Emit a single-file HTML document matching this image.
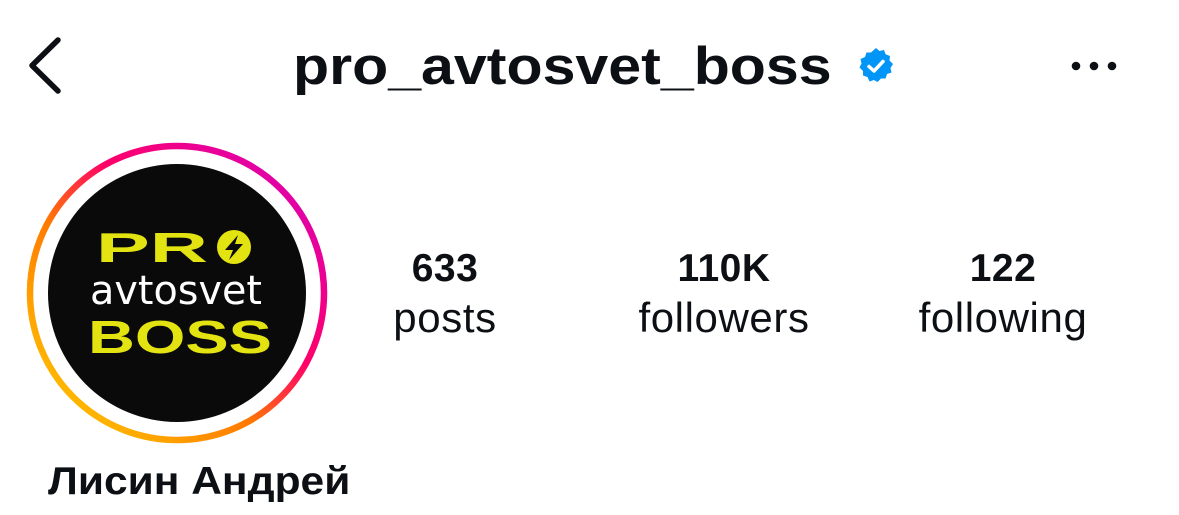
<!DOCTYPE html>
<html><head><meta charset="utf-8"><style>
html,body{margin:0;padding:0;background:#fff;width:1179px;height:515px;overflow:hidden;position:relative;font-family:"Liberation Sans","DejaVu Sans",sans-serif;color:#0c1014}
.abs{position:absolute}
.title{left:293px;top:37px;font-size:53px;line-height:60px;font-weight:bold;white-space:nowrap;transform:scaleX(1.115);transform-origin:left}
.stat{position:absolute;width:300px;text-align:center}
.num{position:absolute;left:0;width:300px;top:247px;font-size:39px;line-height:44px;font-weight:bold;letter-spacing:0.5px}
.lab{position:absolute;left:0;width:300px;top:294px;font-size:42px;line-height:48px;letter-spacing:0.6px}
.name{left:48px;top:460px;font-size:39px;font-weight:bold;white-space:nowrap;transform:scaleX(1.09);transform-origin:left}
</style></head><body>
<svg class="abs" style="left:0;top:0" width="120" height="120">
<polyline points="58,40 32,65.5 58,91" fill="none" stroke="#0c1014" stroke-width="5.5" stroke-linecap="round" stroke-linejoin="round"/>
</svg>
<div class="abs title">pro_avtosvet_boss</div>
<svg class="abs" style="left:856px;top:46px" width="40" height="40" viewBox="0 0 40 40">
<polygon fill="#0095f6" points="20,2 23.5,5 28,4 29.6,8.3 34,10 33.5,14.5 37,18 34.5,22 35.5,26.5 31,28 29.5,32.5 25,32.5 21.5,36 18,34 13.5,35.5 11.5,31 7,29.5 7,25 3.5,21.5 5.5,17.5 4.5,13 9,11 10.5,6.5 15,6.5"/>
<polyline points="13,20.5 18,25 27,15.5" fill="none" stroke="#fff" stroke-width="3.5" stroke-linecap="round" stroke-linejoin="round"/>
</svg>
<svg class="abs" style="left:1066px;top:56px" width="60" height="20">
<circle cx="10" cy="10" r="4.3" fill="#0c1014"/><circle cx="28" cy="10" r="4.3" fill="#0c1014"/><circle cx="46" cy="10" r="4.3" fill="#0c1014"/>
</svg>
<svg class="abs" style="left:22px;top:138px" width="310" height="310" viewBox="0 0 310 310">
<defs><linearGradient id="g" x1="0" y1="1" x2="1" y2="0">
<stop offset="0" stop-color="#ffd600"/><stop offset="0.4" stop-color="#ff7a00"/><stop offset="0.6" stop-color="#ff0069"/><stop offset="1" stop-color="#d300c5"/></linearGradient></defs>
<circle cx="155" cy="155" r="147" fill="none" stroke="url(#g)" stroke-width="6.5"/>
<circle cx="155" cy="155" r="129" fill="#0a0a0a"/>
<text x="74" y="124" font-family="Liberation Sans" font-weight="bold" font-size="42" fill="#e3e312" textLength="112" lengthAdjust="spacingAndGlyphs">PR</text>
<circle cx="212" cy="109" r="17" fill="#e3e312"/>
<polygon points="216,97 203,112 211,112 207,122 221,106 213,106" fill="#0a0a0a"/>
<text x="68" y="166" font-family="DejaVu Sans" font-size="40" fill="#fff" textLength="172" lengthAdjust="spacingAndGlyphs">avtosvet</text>
<text x="66" y="215" font-family="Liberation Sans" font-weight="bold" font-size="46" fill="#e3e312" textLength="184" lengthAdjust="spacingAndGlyphs">BOSS</text>
</svg>
<div class="stat" style="left:295px;top:0"><div class="num">633</div><div class="lab">posts</div></div>
<div class="stat" style="left:574px;top:0"><div class="num">110K</div><div class="lab">followers</div></div>
<div class="stat" style="left:853px;top:0"><div class="num">122</div><div class="lab">following</div></div>
<div class="abs name">Лисин Андрей</div>
</body></html>
